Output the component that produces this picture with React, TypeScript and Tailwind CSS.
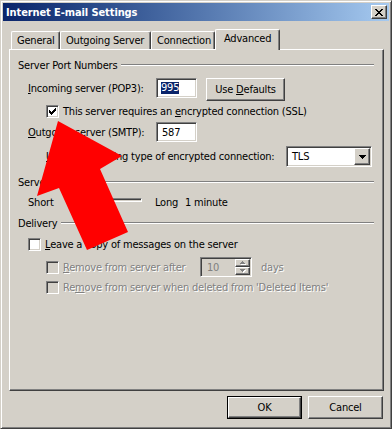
import React from "react";

const raised =
  "border border-t-white border-l-white border-r-[#404040] border-b-[#404040] shadow-[inset_-1px_-1px_0_#808080]";
const sunken =
  "border border-t-[#808080] border-l-[#808080] border-r-white border-b-white shadow-[inset_1px_1px_0_#404040,inset_-1px_-1px_0_#d4d0c8]";
const dis = "text-[#808080] [text-shadow:1px_1px_0_#ffffff]";

function CheckMark() {
  const cols: [number, number][] = [
    [3, 5],
    [4, 6],
    [5, 7],
    [6, 6],
    [7, 5],
    [8, 4],
    [9, 3],
  ];
  return (
    <svg width="11" height="11" viewBox="0 0 11 11" className="block" shapeRendering="crispEdges">
      {cols.map(([x, y]) => (
        <rect key={x} x={x - 1} y={y - 1} width="1" height="3" fill="#000" />
      ))}
    </svg>
  );
}

function CheckBox({ checked = false, disabled = false }: { checked?: boolean; disabled?: boolean }) {
  return (
    <div
      className={`w-[13px] h-[13px] shrink-0 ${sunken} ${disabled ? "bg-[#d4d0c8]" : "bg-white"}`}
    >
      {checked && <CheckMark />}
    </div>
  );
}

function XGlyph() {
  const rows = [
    [0, 1, 6, 7],
    [1, 2, 5, 6],
    [2, 3, 4, 5],
    [3, 4],
    [2, 3, 4, 5],
    [1, 2, 5, 6],
    [0, 1, 6, 7],
  ];
  return (
    <svg width="8" height="7" viewBox="0 0 8 7" shapeRendering="crispEdges" className="block">
      {rows.map((r, y) => r.map((x) => <rect key={`${x}-${y}`} x={x} y={y} width="1" height="1" fill="#000" />))}
    </svg>
  );
}

function Tri({ up = false, color = "#000", shadow = false }: { up?: boolean; color?: string; shadow?: boolean }) {
  const rows = up ? [[2, 1], [1, 3], [0, 5]] : [[0, 7], [1, 5], [2, 3], [3, 1]];
  const w = up ? 6 : 7;
  const h = 4;
  return (
    <svg width={w} height={h} viewBox={`0 0 ${w} ${h}`} shapeRendering="crispEdges" className="block">
      {shadow &&
        rows.map(([x, len], y) => (
          <rect key={`s${y}`} x={x + 1} y={y + 1} width={len} height="1" fill="#fff" />
        ))}
      {rows.map(([x, len], y) => (
        <rect key={y} x={x} y={y} width={len} height="1" fill={color} />
      ))}
    </svg>
  );
}

function Tab({ label, w, selected = false }: { label: string; w: number; selected?: boolean }) {
  if (selected) {
    return (
      <div
        style={{ width: w }}
        className="h-[21px] -mb-[1px] relative z-10 bg-[#d4d0c8] border-t border-l border-r border-t-white border-l-white border-r-[#404040] shadow-[inset_-1px_0_0_#808080] rounded-t-[2px] pl-[8px] pt-[2px] whitespace-nowrap"
      >
        {label}
      </div>
    );
  }
  return (
    <div
      style={{ width: w }}
      className="h-[18px] border-t border-l border-r border-t-white border-l-white border-r-[#404040] shadow-[inset_-1px_0_0_#808080] rounded-t-[2px] pl-[5px] pt-[2px] whitespace-nowrap"
    >
      {label}
    </div>
  );
}

function Header({ label, mt }: { label: string; mt: string }) {
  return (
    <div className={`flex items-center h-[14px] pl-[8px] pr-[9px] gap-[4px] ${mt}`}>
      <span className="whitespace-nowrap">{label}</span>
      <div className="flex-1 h-[2px] border-t border-b border-t-[#808080] border-b-white" />
    </div>
  );
}

function U({ children }: { children: React.ReactNode }) {
  return <span className="underline underline-offset-[1px]">{children}</span>;
}

export default function App() {
  return (
    <div className="relative w-[392px] h-[429px] bg-[#d4d0c8] font-['DejaVu_Sans_Condensed','DejaVu_Sans',sans-serif] text-[11px] leading-[13px] tracking-[-0.2px] text-black select-none overflow-hidden">
      <div className="w-full h-full border border-t-[#d4d0c8] border-l-[#d4d0c8] border-r-[#404040] border-b-[#404040] shadow-[inset_1px_1px_0_#ffffff,inset_-1px_-1px_0_#808080] p-[2px] flex flex-col">
        {/* Title bar */}
        <div className="h-[18px] shrink-0 flex items-center bg-linear-to-r from-[#0a246a] to-[#a6caf0] pl-[3px] pr-[2px]">
          <span className="font-bold text-white flex-1 tracking-[-0.1px]">Internet E-mail Settings</span>
          <div className={`w-[16px] h-[14px] bg-[#d4d0c8] flex items-center justify-center ${raised}`}>
            <XGlyph />
          </div>
        </div>

        {/* Body */}
        <div className="flex flex-col pl-[6px] pr-[5px] mt-[8px]">
          {/* Tabs */}
          <div className="h-[20px] flex items-end pl-[2px]">
            <Tab label="General" w={49} />
            <Tab label="Outgoing Server" w={91} />
            <Tab label="Connection" w={64} />
            <Tab label="Advanced" w={65} selected />
          </div>

          {/* Panel */}
          <div className="h-[342px] border border-t-white border-l-white border-r-[#404040] border-b-[#404040] shadow-[inset_-1px_-1px_0_#808080] flex flex-col">
            <Header label="Server Port Numbers" mt="mt-[8px]" />

            {/* Incoming */}
            <div className="flex mt-[6px] h-[23px] pl-[18px]">
              <div className="w-[128px] h-[20px] flex items-center whitespace-nowrap">
                <span>
                  <U>I</U>ncoming server (POP3):
                </span>
              </div>
              <div className={`w-[41px] h-[20px] bg-white ${sunken} pl-[4px] flex items-center`}>
                <span className="bg-[#0a246a] text-white leading-[12px]">995</span>
              </div>
              <div
                className={`ml-[9px] w-[79px] h-[23px] flex items-center justify-center whitespace-nowrap ${raised}`}
              >
                <span>
                  Use <U>D</U>efaults
                </span>
              </div>
            </div>

            {/* SSL checkbox */}
            <div className="flex items-center mt-[4px] h-[13px] pl-[36px]">
              <CheckBox checked />
              <span className="ml-[4px] whitespace-nowrap">
                This server requires an <U>e</U>ncrypted connection (SSL)
              </span>
            </div>

            {/* Outgoing */}
            <div className="flex mt-[4px] h-[20px] pl-[18px]">
              <div className="w-[128px] h-[20px] flex items-center whitespace-nowrap">
                <span>
                  <U>O</U>utgoing server (SMTP):
                </span>
              </div>
              <div className={`w-[41px] h-[20px] bg-white ${sunken} pl-[5px] flex items-center`}>
                <span>587</span>
              </div>
            </div>

            {/* Encryption type */}
            <div className="flex items-center mt-[4px] h-[21px] pl-[36px]">
              <div className="w-[240px] whitespace-nowrap">
                <U>U</U>se the following type of encrypted connection:
              </div>
              <div className={`w-[86px] h-[21px] bg-white ${sunken} p-[1px] flex items-center`}>
                <span className="flex-1 pl-[4px]">TLS</span>
                <div className={`w-[16px] h-[17px] bg-[#d4d0c8] flex items-center justify-center ${raised}`}>
                  <Tri />
                </div>
              </div>
            </div>

            <Header label="Server Timeouts" mt="mt-[8px]" />

            {/* Slider */}
            <div className="flex mt-[5px] h-[16px] pl-[18px]">
              <div className="w-[38px] h-[16px] flex items-center">Short</div>
              <div className="w-[76px] h-[4px] mt-[4px] border border-t-[#808080] border-l-[#808080] border-r-white border-b-white shadow-[inset_1px_1px_0_#404040]" />
              <div className="ml-[13px] w-[30px] h-[16px] flex items-center">Long</div>
              <div className="h-[16px] flex items-center whitespace-nowrap">1 minute</div>
            </div>

            <Header label="Delivery" mt="mt-[6px]" />

            {/* Leave a copy */}
            <div className="flex items-center mt-[8px] h-[13px] pl-[18px]">
              <CheckBox />
              <span className="ml-[4px] whitespace-nowrap">
                <U>L</U>eave a copy of messages on the server
              </span>
            </div>

            {/* Remove after */}
            <div className="flex items-center mt-[6px] h-[20px] pl-[36px]">
              <CheckBox disabled />
              <div className={`ml-[4px] w-[137px] whitespace-nowrap ${dis}`}>
                <U>R</U>emove from server after
              </div>
              <div className={`w-[52px] h-[20px] bg-[#d4d0c8] ${sunken} flex items-stretch p-[1px]`}>
                <span className="flex-1 pl-[5px] flex items-center text-[#808080]">10</span>
                <div className="w-[15px] flex flex-col">
                  <div className={`h-[8px] bg-[#d4d0c8] flex items-center justify-center ${raised}`}>
                    <Tri up color="#808080" shadow />
                  </div>
                  <div className={`h-[8px] bg-[#d4d0c8] flex items-center justify-center ${raised}`}>
                    <svg width="6" height="4" viewBox="0 0 6 4" shapeRendering="crispEdges" className="block">
                      <rect x="1" y="1" width="5" height="1" fill="#fff" />
                      <rect x="2" y="2" width="3" height="1" fill="#fff" />
                      <rect x="3" y="3" width="1" height="1" fill="#fff" />
                      <rect x="0" y="0" width="5" height="1" fill="#808080" />
                      <rect x="1" y="1" width="3" height="1" fill="#808080" />
                      <rect x="2" y="2" width="1" height="1" fill="#808080" />
                    </svg>
                  </div>
                </div>
              </div>
              <span className={`ml-[9px] ${dis}`}>days</span>
            </div>

            {/* Remove when deleted */}
            <div className="flex items-center mt-[4px] h-[13px] pl-[36px]">
              <CheckBox disabled />
              <span className={`ml-[4px] whitespace-nowrap ${dis}`}>
                Re<U>m</U>ove from server when deleted from 'Deleted Items'
              </span>
            </div>
          </div>

          {/* Buttons */}
          <div className="flex justify-end gap-[6px] mt-[5px] pr-[1px]">
            <div className="w-[75px] h-[23px] border border-black">
              <div className={`w-full h-full flex items-center justify-center ${raised}`}>OK</div>
            </div>
            <div className={`w-[75px] h-[23px] flex items-center justify-center ${raised}`}>Cancel</div>
          </div>
        </div>
      </div>

      {/* Red arrow annotation overlay */}
      <svg
        className="absolute left-0 top-0 pointer-events-none"
        width="392"
        height="429"
        viewBox="0 0 392 429"
      >
        <polygon points="58,121 122,156 100,169 128,232 87,250 59,188 37,196" fill="#ff0000" />
      </svg>
    </div>
  );
}
